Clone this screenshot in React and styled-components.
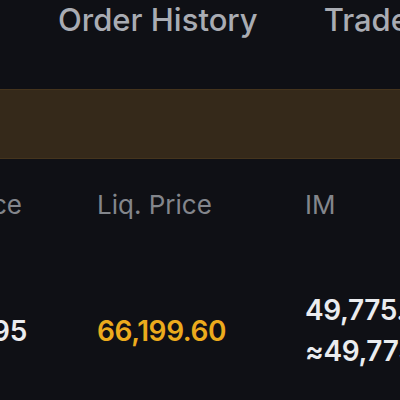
import React from 'react';
import styled, { createGlobalStyle } from 'styled-components';

const GlobalStyle = createGlobalStyle`
    html, body {
        margin: 0;
        padding: 0;
        background: #0f1015;
    }
    body {
        font-family: Inter, "Noto Sans", sans-serif;
    }
`;

const Page = styled.div`
    width: 400px;
    height: 400px;
    overflow: hidden;
    background: #0f1015;
`;

const Tabs = styled.div`
    display: flex;
    gap: 66px;
    padding: 0 0 0 58px;
    height: 89px;
    white-space: nowrap;
`;

const Tab = styled.div`
    font-size: 31px;
    line-height: 40px;
    font-weight: 500;
    color: #a9acb3;
`;

const Banner = styled.div`
    height: 68px;
    background: #35291a;
    border-top: 1px solid #45341d;
    border-bottom: 1px solid #45341d;
`;

const Table = styled.div`
    display: flex;
    flex-direction: column;
    margin-left: -111px;
`;

const Row = styled.div`
    display: grid;
    grid-template-columns: repeat(3, 208px);
    align-items: center;
    height: ${(p) => p.$height}px;
    white-space: nowrap;
`;

const HeadCell = styled.div`
    font-size: 26px;
    color: #83868c;
`;

const Cell = styled.div`
    font-size: 28px;
    line-height: 41px;
    font-weight: 600;
    letter-spacing: -0.4px;
    color: ${(p) => (p.$accent ? '#ecab1d' : '#eaecef')};
`;

function App() {
    return (
        <Page>
            <GlobalStyle />
            <Tabs>
                <Tab>Order History</Tab>
                <Tab>Trade History</Tab>
            </Tabs>

            <Banner />

            <Table>
                <Row $height={90}>
                    <HeadCell>Mark Price</HeadCell>
                    <HeadCell>Liq. Price</HeadCell>
                    <HeadCell>IM</HeadCell>
                </Row>
                <Row $height={164}>
                    <Cell>64,250.95</Cell>
                    <Cell $accent>66,199.60</Cell>
                    <Cell>
                        49,775.24
                        <br />
                        ≈49,775.24 USD
                    </Cell>
                </Row>
            </Table>
        </Page>
    );
}

export default App;
